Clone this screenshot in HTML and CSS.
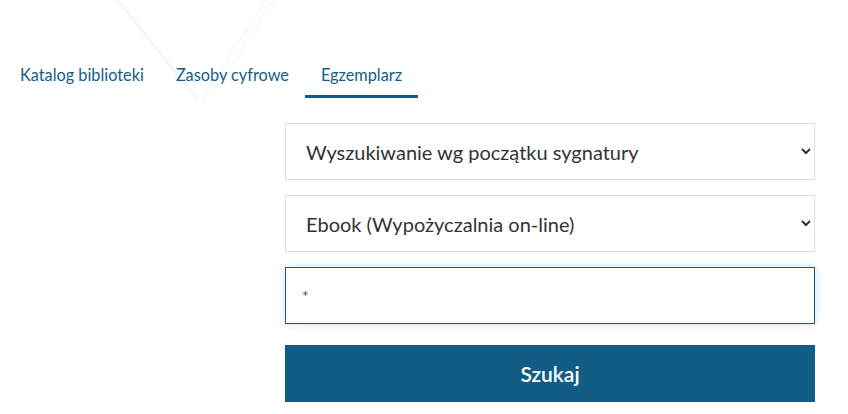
FILE: index.html
```html
<!DOCTYPE html>
<html lang="pl">
<head>
  <meta charset="UTF-8">
  <meta name="viewport" content="width=device-width, initial-scale=1.0">
  <title>Katalog biblioteki</title>
  <link rel="stylesheet" href="styles.css">
</head>
<body>
  <svg class="decor" width="320" height="110" viewBox="0 0 320 110">
    <path d="M114 -4 L198 100" stroke="#f7f7f7" stroke-width="3" fill="none"/>
    <path d="M268 -4 L203 98" stroke="#f8f8f8" stroke-width="2" fill="none"/>
    <path d="M276 -4 L209 98" stroke="#f9f9f9" stroke-width="2" fill="none"/>
  </svg>

  <nav class="tabs">
    <a href="#" class="tab">Katalog biblioteki</a>
    <a href="#" class="tab">Zasoby cyfrowe</a>
    <a href="#" class="tab active">Egzemplarz</a>
  </nav>

  <form class="search" id="searchForm">
    <select class="field">
      <option>Wyszukiwanie wg początku sygnatury</option>
      <option>Wyszukiwanie wg sygnatury</option>
      <option>Wyszukiwanie wg numeru inwentarza</option>
    </select>
    <select class="field">
      <option>Ebook (Wypożyczalnia on-line)</option>
      <option>Wypożyczalnia</option>
      <option>Czytelnia</option>
    </select>
    <input class="field query" type="text" value="*">
    <button type="submit" class="btn">Szukaj</button>
  </form>
</body>
</html>
```

FILE: styles.css
```css
body {
  margin: 0;
  font-family: Lato, "Open Sans", sans-serif;
  background: #fff;
  position: relative;
}
.decor {
  position: absolute;
  left: 0;
  top: 0;
  z-index: -1;
}
.tabs {
  display: flex;
  padding: 65px 0 0 4px;
}
.tab {
  font-size: 16.3px;
  line-height: 19px;
  color: #155e86;
  text-decoration: none;
  padding: 0 16px 11px;
  border-bottom: 3px solid transparent;
}
.tab.active {
  border-bottom-color: #125d86;
}
.search {
  width: 530px;
  margin: 25px 0 0 285px;
  display: flex;
  flex-direction: column;
}
.field {
  box-sizing: border-box;
  height: 57px;
  margin-bottom: 15px;
  padding: 0 16px;
  border: 1px solid #ddd;
  border-radius: 0;
  background: #fff;
  font-family: Lato, sans-serif;
  font-size: 20px;
  color: #333;
}
.query {
  padding: 0 16px;
  margin-bottom: 21px;
  font-size: 16px;
  color: #555;
  border-color: #125d86;
  box-shadow: 0 0 8px rgba(80, 150, 230, 0.3);
  outline: none;
}
.btn {
  height: 57px;
  border: none;
  background: #125d86;
  color: #fff;
  font-family: Lato, sans-serif;
  font-size: 21px;
  font-weight: 600;
  cursor: pointer;
}
```
